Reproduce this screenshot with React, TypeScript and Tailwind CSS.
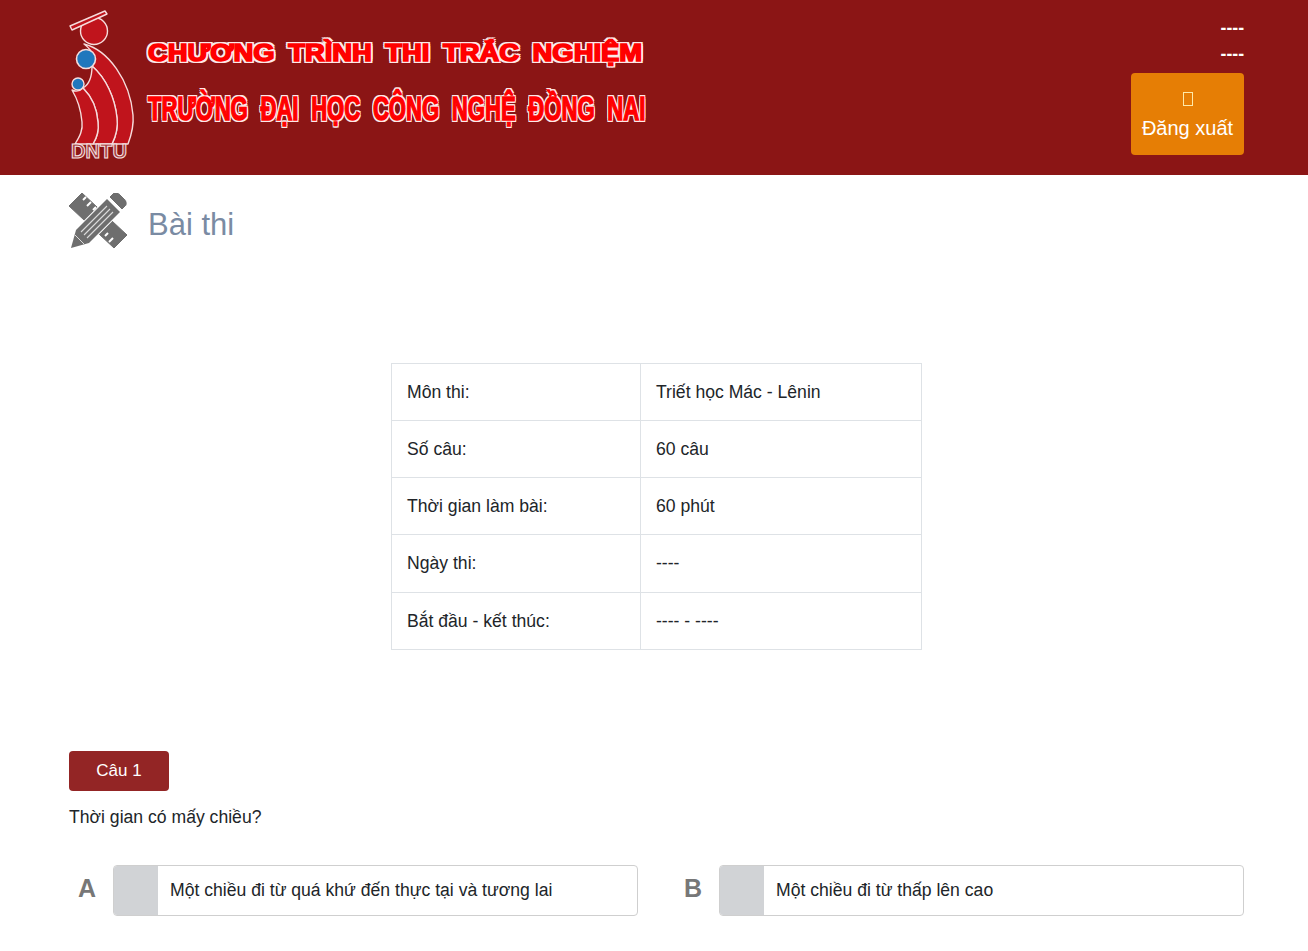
function Logo() {
  return (
    <svg viewBox="69 10 66 152" className="w-[66px] h-[152px] shrink-0">
      <g fill="#c0141c" stroke="#f6dcdc" strokeWidth="1.4" strokeLinejoin="round">
        <circle cx="94" cy="31" r="13.5" />
        <path d="M84 44 C108 50 130 80 133 115 C134 126 131 136 128 144 L112 144 C117 134 118 126 117 118 C115 98 106 78 92 66 C96 58 92 50 84 44 Z" />
        <path d="M92 66 C106 78 115 98 117 118 C118 126 117 134 112 144 L93 144 C98 136 99 130 98 122 C97 108 91 96 83 88 C90 84 92 74 92 66 Z" />
        <path d="M83 88 C91 96 97 108 98 122 C99 130 98 136 93 144 L75 144 C80 136 83 130 82 122 C81 110 78 100 72 90 C76 92 80 91 83 88 Z" />
        <path d="M70 26 L105 11 L107 14 L72 30 Z" />
      </g>
      <circle cx="86" cy="59" r="9.5" fill="#1f77bd" stroke="#f6dcdc" strokeWidth="1.6" />
      <circle cx="78" cy="84" r="6" fill="#1f77bd" stroke="#f6dcdc" strokeWidth="1.4" />
      <text
        x="71"
        y="158"
        textLength="56"
        lengthAdjust="spacingAndGlyphs"
        fontFamily="'Liberation Sans', sans-serif"
        fontWeight="700"
        fontSize="20"
        fill="#a53b3f"
        stroke="#f6e4e4"
        strokeWidth="1"
      >
        DNTU
      </text>
    </svg>
  );
}

function PencilRuler() {
  return (
    <svg viewBox="69 193 58 56" className="w-[58px] h-[56px] shrink-0">
      <path d="M82 193 L69 206 L114 248 L127 235 Z" fill="#6e6e6e" stroke="#6e6e6e" strokeWidth="1" strokeLinejoin="round" />
      <g stroke="#fff" strokeWidth="2">
        <path d="M86 197 L83 200" />
        <path d="M91 202 L87 206" />
        <path d="M96 207 L93 210" />
        <path d="M108 233 L105 236" />
        <path d="M113 238 L109 242" />
        <path d="M103 228 L100 231" />
      </g>
      <path d="M71 248 L76 230 L107 199 L120 212 L89 243 Z" fill="#6e6e6e" stroke="#fff" strokeWidth="2" strokeLinejoin="round" paintOrder="stroke" />
      <path d="M109 197 L113 193 C115 191 118 192 120 194 L125 199 C127 201 128 204 126 206 L122 210 Z" fill="#6e6e6e" stroke="#fff" strokeWidth="1" />
      <g stroke="#dcdcdc" strokeWidth="1.1">
        <path d="M81 232 L107 206" />
        <path d="M84 235 L110 209" />
        <path d="M87 238 L113 212" />
      </g>
      <path d="M75 235 L84 244" stroke="#dcdcdc" strokeWidth="1" />
    </svg>
  );
}

const infoRows = [
  { label: "Môn thi:", value: "Triết học Mác - Lênin", h: "h-[57px]" },
  { label: "Số câu:", value: "60 câu", h: "h-[57px]" },
  { label: "Thời gian làm bài:", value: "60 phút", h: "h-[57px]" },
  { label: "Ngày thi:", value: "----", h: "h-[58px]" },
  { label: "Bắt đầu - kết thúc:", value: "---- - ----", h: "h-[57px]" },
];

const answers = [
  { letter: "A", text: "Một chiều đi từ quá khứ đến thực tại và tương lai" },
  { letter: "B", text: "Một chiều đi từ thấp lên cao" },
];

export default function App() {
  return (
    <div className="min-h-[951px] bg-white font-['Liberation_Sans',Arial,sans-serif] text-[17.6px] text-[#212529]">
      {/* Header */}
      <header className="h-[175px] bg-[#8b1515]">
        <div className="ml-[69px] flex w-[1175px] items-start justify-between">
          <div className="flex pt-[10px]">
            <Logo />
            <div className="ml-[13px] flex flex-col font-bold text-[#ff0000] [-webkit-text-stroke:1.5px_#ff0000] [text-shadow:2px_0_#fbeaea,-2px_0_#fbeaea,0_2px_#fbeaea,0_-2px_#fbeaea,2px_2px_#fbeaea,-2px_-2px_#fbeaea,2px_-2px_#fbeaea,-2px_2px_#fbeaea]">
              <span className="mt-[25px] h-[36px] w-[499px] origin-left scale-x-[1.19] whitespace-nowrap text-[23px] leading-[36px] [word-spacing:5px]">
                CHƯƠNG TRÌNH THI TRẮC NGHIỆM
              </span>
              <span className="mt-[15px] h-[44px] w-[499px] origin-left scale-x-[0.65] whitespace-nowrap text-[34px] leading-[44px] [word-spacing:10px]">
                TRƯỜNG ĐẠI HỌC CÔNG NGHỆ ĐỒNG NAI
              </span>
            </div>
          </div>
          <div className="flex flex-col items-end pt-[15px] font-bold text-white">
            <span className="leading-[26px]">----</span>
            <span className="leading-[26px]">----</span>
            <button className="mt-[6px] flex h-[82px] w-[113px] flex-col items-center rounded-[4px] bg-[#e67e05] pt-[19px] text-[20px] font-normal">
              <span className="h-[14px] w-[10px] border border-[#ffe9a8]" />
              <span className="mt-[7px] leading-[30px]">Đăng xuất</span>
            </button>
          </div>
        </div>
      </header>

      <main className="ml-[69px] w-[1175px]">
        {/* Title */}
        <div className="flex items-start pt-[18px]">
          <PencilRuler />
          <h1 className="mt-[4px] ml-[21px] text-[31px] leading-[56px] text-[#7a8ba3]">Bài thi</h1>
        </div>

        {/* Exam info */}
        <div className="mt-[110px] flex justify-center">
          <table className="w-[531px] table-fixed border-collapse">
            <colgroup>
              <col className="w-[249px]" />
              <col />
            </colgroup>
            <tbody>
              {infoRows.map((row) => (
                <tr key={row.label} className={row.h}>
                  <td className="border border-[#dee2e6] px-[15px]">{row.label}</td>
                  <td className="border border-[#dee2e6] px-[15px]">{row.value}</td>
                </tr>
              ))}
            </tbody>
          </table>
        </div>

        {/* Question */}
        <div className="mt-[101px]">
          <div className="flex h-10 w-[100px] items-center justify-center rounded-[4px] bg-[#932525] text-[17px] text-white">
            Câu 1
          </div>
          <p className="mt-[14px] leading-6">Thời gian có mấy chiều?</p>
          <div className="mt-[36px] grid grid-cols-2 gap-x-[37px]">
            {answers.map((a) => (
              <div key={a.letter} className="flex items-center">
                <span className="mb-[4px] w-[44px] pl-[9px] text-[25px] font-bold text-[#777777]">{a.letter}</span>
                <div className="flex h-[51px] flex-1 items-stretch overflow-hidden rounded-[4px] border border-[#cfcfcf]">
                  <span className="w-[44px] bg-[#d1d3d6]" />
                  <span className="flex items-center pl-[12px]">{a.text}</span>
                </div>
              </div>
            ))}
          </div>
        </div>
      </main>
    </div>
  );
}
